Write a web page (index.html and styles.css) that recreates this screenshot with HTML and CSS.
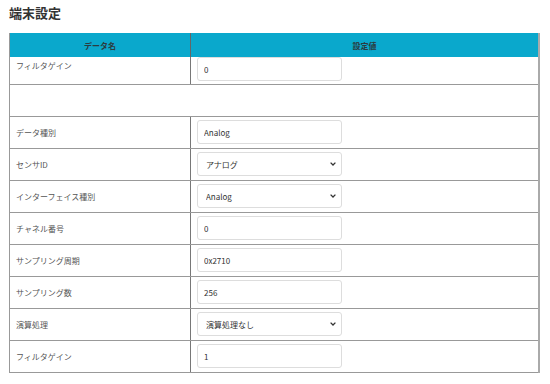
FILE: index.html
```html
<!DOCTYPE html>
<html>
	<head>
		<meta charset="UTF-8">
		<title>端末設定</title>
		<link rel="stylesheet" href="styles.css">
	</head>
	<body>
		<div class="page">
			<h1 class="title">端末設定</h1>
			<table class="tbl">
				<colgroup>
					<col class="col-name">
					<col>
				</colgroup>
				<thead>
					<tr>
						<th class="name">データ名</th>
						<th>設定値</th>
					</tr>
				</thead>
				<tbody>
					<!-- 上にスクロールして一部隠れている行 -->
					<tr class="cut">
						<td class="name"><span>フィルタゲイン</span></td>
						<td><input class="field" type="text" value="0"></td>
					</tr>
					<tr class="blank">
						<td colspan="2"></td>
					</tr>
					<tr>
						<td class="name">データ種別</td>
						<td><input class="field" type="text" value="Analog"></td>
					</tr>
					<tr>
						<td class="name">センサID</td>
						<td>
							<div class="sel">
								<select class="field">
									<option>アナログ</option>
								</select>
								<svg width="6" height="4" viewBox="0 0 6 4"><path d="M0.6 0.6 L3 3 L5.4 0.6" fill="none" stroke="#333" stroke-width="1.3"/></svg>
							</div>
						</td>
					</tr>
					<tr>
						<td class="name">インターフェイス種別</td>
						<td>
							<div class="sel">
								<select class="field">
									<option>Analog</option>
								</select>
								<svg width="6" height="4" viewBox="0 0 6 4"><path d="M0.6 0.6 L3 3 L5.4 0.6" fill="none" stroke="#333" stroke-width="1.3"/></svg>
							</div>
						</td>
					</tr>
					<tr>
						<td class="name">チャネル番号</td>
						<td><input class="field" type="text" value="0"></td>
					</tr>
					<tr>
						<td class="name">サンプリング周期</td>
						<td><input class="field" type="text" value="0x2710"></td>
					</tr>
					<tr>
						<td class="name">サンプリング数</td>
						<td><input class="field" type="text" value="256"></td>
					</tr>
					<tr>
						<td class="name">演算処理</td>
						<td>
							<div class="sel">
								<select class="field">
									<option>演算処理なし</option>
								</select>
								<svg width="6" height="4" viewBox="0 0 6 4"><path d="M0.6 0.6 L3 3 L5.4 0.6" fill="none" stroke="#333" stroke-width="1.3"/></svg>
							</div>
						</td>
					</tr>
					<tr>
						<td class="name">フィルタゲイン</td>
						<td><input class="field" type="text" value="1"></td>
					</tr>
				</tbody>
			</table>
		</div>
	</body>
</html>
```

FILE: styles.css
```css
body{
	margin: 0;
	background: #fff;
	font-family: "Noto Sans CJK JP", "Noto Sans", sans-serif;
	color: #444;
}
.page{
	padding: 3px 10px 0 9px;
}
.title{
	margin: 0 0 10px;
	font-size: 13px;
	line-height: 20px;
	font-weight: bold;
	color: #333;
}
.tbl{
	width: 531px;
	table-layout: fixed;
	border-collapse: collapse;
	border-left: 1px solid #999;
	border-right: 2px solid #aaa;
	border-bottom: 1px solid #999;
}
.col-name{
	width: 181px;
}
.tbl th{
	height: 24px;
	padding: 0;
	background: #0aa8cc;
	color: #2b3b40;
	font-size: 8px;
	font-weight: bold;
	text-align: center;
}
.tbl th.name{
	border-right: 1px solid #666;
}
.tbl td{
	padding: 0 6px;
	font-size: 8px;
	color: #555;
	border-bottom: 1px solid #999;
	vertical-align: middle;
}
.tbl td.name{
	border-right: 1px solid #777;
}
.tbl tbody tr{
	height: 32px;
}
.tbl tbody tr.cut{
	height: 27px;
}
.tbl tr.cut td{
	vertical-align: bottom;
	padding-bottom: 3px;
}
.tbl tr.cut td.name span{
	display: block;
	padding-bottom: 10px;
}
.tbl tr.cut .field{
	margin-top: -4px;
	padding-top: 1px;
}
.field{
	display: block;
	box-sizing: border-box;
	width: 145px;
	height: 24px;
	padding: 0 6px;
	border: 1px solid #ddd;
	border-radius: 3px;
	background: #fff;
	font-family: "Noto Sans CJK JP", "Noto Sans", sans-serif;
	font-size: 8px;
	color: #333;
}
.sel{
	position: relative;
	width: 145px;
}
.sel select{
	appearance: none;
	-webkit-appearance: none;
	padding: 0 8px;
}
.sel svg{
	position: absolute;
	right: 6px;
	top: 10px;
	pointer-events: none;
}
```
